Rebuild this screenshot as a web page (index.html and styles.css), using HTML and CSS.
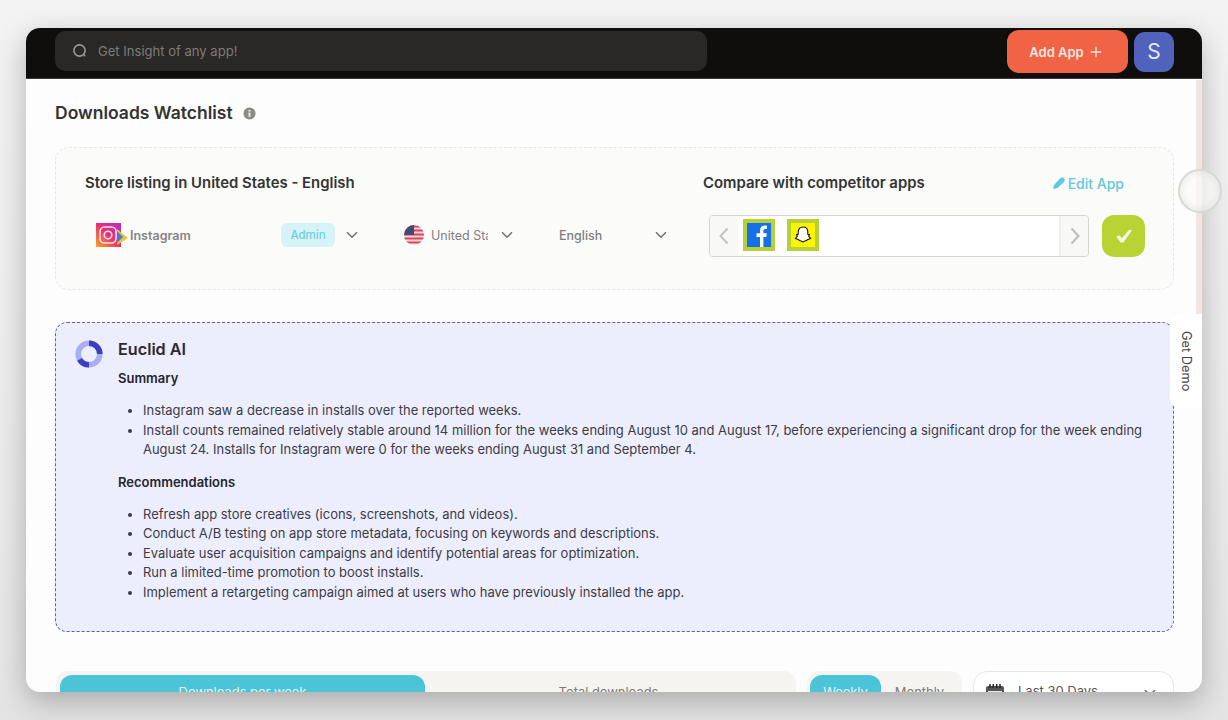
FILE: index.html
```html
<!DOCTYPE html>
<html lang="en">
<head>
<meta charset="utf-8">
<title>Downloads Watchlist</title>
<link rel="stylesheet" href="styles.css">
</head>
<body>
<div class="window">
  <header class="topbar">
    <div class="search">
      <svg class="search-icon" viewBox="0 0 16 16" width="16" height="16"><circle cx="7.5" cy="7.5" r="5.6" fill="none" stroke="#9a9a98" stroke-width="1.6"/><path d="M11.6 11.6l1.6 1.6" stroke="#9a9a98" stroke-width="1.4"/></svg>
      <span>Get Insight of any app!</span>
    </div>
    <button class="add-app">Add App <svg viewBox="0 0 12 12" width="12" height="12"><path d="M6 .8v10.4M.8 6h10.4" stroke="#f8e6e0" stroke-width="1.4"/></svg></button>
    <div class="avatar">S</div>
  </header>
  <main class="content">
    <h1 class="page-title">Downloads Watchlist <svg viewBox="0 0 14 14" width="13" height="13"><circle cx="7" cy="7" r="6.5" fill="#8a8a86"/><rect x="6" y="6" width="2" height="4.5" fill="#f2f2f0"/><rect x="6" y="3.2" width="2" height="1.8" fill="#f2f2f0"/></svg></h1>

    <section class="store-card">
      <div class="store-left">
        <h2 class="card-heading">Store listing in United States - English</h2>
        <div class="filters">
          <div class="filter app-filter">
            <svg class="app-icon" viewBox="0 0 32 26" width="32" height="26">
              <defs><linearGradient id="ig" x1="0" y1="1" x2="1" y2="0"><stop offset="0" stop-color="#fca81e"/><stop offset=".5" stop-color="#ee2f70"/><stop offset="1" stop-color="#b030c8"/></linearGradient></defs>
              <rect x="0" y="1" width="25" height="24" fill="url(#ig)"/>
              <rect x="4" y="5" width="16" height="16" rx="4.5" fill="none" stroke="#fbe3ee" stroke-width="1.6"/>
              <circle cx="12" cy="13" r="3.8" fill="none" stroke="#fbe3ee" stroke-width="1.6"/>
              <path d="M21 7l11 9-11 7z" fill="#f1c232"/><path d="M21 9l6 6-6 6z" fill="#3d7ed8"/>
            </svg>
            <span class="app-name">Instagram</span>
            <span class="badge">Admin</span>
            <svg class="chev" viewBox="0 0 12 8" width="12" height="8"><path d="M1 1.2l5 5 5-5" fill="none" stroke="#6f6f6f" stroke-width="1.5"/></svg>
          </div>
          <div class="filter country-filter">
            <svg class="flag" viewBox="0 0 20 20" width="20" height="20">
              <clipPath id="fc"><circle cx="10" cy="10" r="10"/></clipPath>
              <g clip-path="url(#fc)"><rect width="20" height="20" fill="#f3d5d8"/>
              <path d="M0 1.500h20M0 5.500h20M0 9.500h20M0 13.500h20M0 17.500h20" stroke="#d9475a" stroke-width="2"/>
              <rect width="10" height="10" fill="#3f4a78"/></g>
            </svg>
            <span class="clip-text">United States</span>
            <svg class="chev" viewBox="0 0 12 8" width="12" height="8"><path d="M1 1.2l5 5 5-5" fill="none" stroke="#6f6f6f" stroke-width="1.5"/></svg>
          </div>
          <div class="filter lang-filter">
            <span class="lang">English</span>
            <svg class="chev" viewBox="0 0 12 8" width="12" height="8"><path d="M1 1.2l5 5 5-5" fill="none" stroke="#6f6f6f" stroke-width="1.5"/></svg>
          </div>
        </div>
      </div>
      <div class="store-right">
        <div class="compare-head">
          <h2 class="card-heading">Compare with competitor apps</h2>
          <a class="edit-app"><svg viewBox="0 0 14 14" width="14" height="14"><path d="M1 13l1-4 6-6.500 2.500-1.500 2.500 2.500-1 2.500L5.500 12z" fill="#5ec8dc"/></svg>Edit App</a>
        </div>
        <div class="compare-row">
          <div class="carousel">
            <div class="arrow arrow-l"><svg viewBox="0 0 10 18" width="10" height="18"><path d="M8.500 1.500L1.500 9l7 7.500" fill="none" stroke="#c4c4c4" stroke-width="2"/></svg></div>
            <div class="tile fb"><svg viewBox="0 0 24 24" width="24" height="24"><rect width="24" height="24" fill="#1670e6"/><path d="M13 24v-10h-3.500v-3.800H13V7.500c0-3.300 2-5 4.800-5 .9 0 1.800.1 2.200.2v3.300h-1.700c-1.500 0-1.900.8-1.900 1.900v2.300h3.400l-.5 3.800h-2.900v10z" fill="#fff"/></svg></div>
            <div class="tile snap"><svg viewBox="0 0 24 24" width="24" height="24"><rect width="24" height="24" fill="#fbf500"/><path d="M12 4c3 0 4.800 2.200 4.800 5v2.300l1.700.3-.9 1.600 2 2.200c-1 .7-2.200.8-3 1.200-.5 1-1 1.200-2 1.100-1.200 0-1.700 1.200-2.600 1.200s-1.400-1.200-2.600-1.200c-1 .1-1.500-.1-2-1.100-.8-.4-2-.5-3-1.200l2-2.200-.9-1.600 1.700-.3V9c0-2.800 1.800-5 4.800-5z" fill="#fff" stroke="#111" stroke-width="1.100"/></svg></div>
            <div class="arrow arrow-r"><svg viewBox="0 0 10 18" width="10" height="18"><path d="M1.500 1.500L8.500 9l-7 7.500" fill="none" stroke="#bdbdbd" stroke-width="2"/></svg></div>
          </div>
          <button class="confirm"><svg viewBox="0 0 16 14" width="18" height="16"><path d="M1 7.500l3-1.200 2 2.800 6.500-7.600 2.500.5-7.500 10.800h-2.500z" fill="#f4f8dc"/></svg></button>
        </div>
      </div>
    </section>

    <section class="ai-card">
      <svg class="ai-logo" viewBox="0 0 28 28" width="28" height="28">
        <circle cx="14" cy="14" r="10.800" fill="none" stroke="#a9aef0" stroke-width="5.600"/>
        <path d="M14 3.200A10.800 10.800 0 0 1 24.800 14" fill="none" stroke="#3c3fc4" stroke-width="5.600"/>
        <path d="M4.600 19.300A10.800 10.800 0 0 0 14 24.800" fill="none" stroke="#3c3fc4" stroke-width="5.600"/>
      </svg>
      <div class="ai-body">
        <h2 class="ai-title">Euclid AI</h2>
        <h3 class="ai-sub">Summary</h3>
        <ul class="ai-list">
          <li>Instagram saw a decrease in installs over the reported weeks.</li>
          <li>Install counts remained relatively stable around 14 million for the weeks ending August 10 and August 17, before experiencing a significant drop for the week ending August 24. Installs for Instagram were 0 for the weeks ending August 31 and September 4.</li>
        </ul>
        <h3 class="ai-sub">Recommendations</h3>
        <ul class="ai-list">
          <li>Refresh app store creatives (icons, screenshots, and videos).</li>
          <li>Conduct A/B testing on app store metadata, focusing on keywords and descriptions.</li>
          <li>Evaluate user acquisition campaigns and identify potential areas for optimization.</li>
          <li>Run a limited-time promotion to boost installs.</li>
          <li>Implement a retargeting campaign aimed at users who have previously installed the app.</li>
        </ul>
      </div>
    </section>

    <div class="tabs-row">
      <div class="seg seg-main">
        <div class="seg-item active">Downloads per week</div>
        <div class="seg-item">Total downloads</div>
      </div>
      <div class="seg seg-period">
        <div class="seg-item active">Weekly</div>
        <div class="seg-item">Monthly</div>
      </div>
      <div class="date-pick">
        <svg viewBox="0 0 20 20" width="20" height="20"><rect x="1" y="3" width="18" height="16" rx="2" fill="#555"/><rect x="3" y="8" width="14" height="9" fill="#e8e8e8"/><path d="M5 1v4M8.300 1v4M11.700 1v4M15 1v4" stroke="#222" stroke-width="1.500"/></svg>
        <span>Last 30 Days</span>
        <svg class="chev date-chev" viewBox="0 0 12 8" width="12" height="8"><path d="M1 1.2l5 5 5-5" fill="none" stroke="#6f6f6f" stroke-width="1.500"/></svg>
      </div>
    </div>
  </main>
  <div class="scroll-track"></div>
  <div class="get-demo"><span>Get Demo</span></div>
</div>
<div class="bubble"></div>
</body>
</html>
```

FILE: styles.css
```css
* { box-sizing: border-box; }
html, body { height: 100%; }
body {
  margin: 0;
  padding: 28px 26px;
  height: 720px;
  overflow: hidden;
  background: linear-gradient(180deg, #f3f3f3 0%, #ececec 60%, #e4e4e4 100%);
  font-family: Inter, "Liberation Sans", sans-serif;
  color: #2b2b2b;
  position: relative;
}
.window {
  position: relative;
  width: 1176px;
  height: 664px;
  background: #fdfdfd;
  border-radius: 14px;
  overflow: hidden;
  box-shadow: 0 10px 30px rgba(0, 0, 0, .26);
}
.topbar {
  height: 51px;
  background: #0f0e0d;
  border-bottom: 1px solid #3a3a38;
  display: flex;
  align-items: center;
  padding: 0 28px 0 29px;
}
.search {
  width: 652px;
  height: 40px;
  margin-top: -4px;
  background: #2a2826;
  border-radius: 10px;
  display: flex;
  align-items: center;
  gap: 10px;
  padding: 0 17px;
  font-size: 13.050px;
  color: #7d7b79;
}
.search-icon { flex: none; }
.add-app {
  margin-left: auto;
  width: 121px;
  height: 43px;
  margin-top: -3px;
  padding: 0 4px 0 0;
  border: 0;
  border-radius: 12px;
  background: #f06445;
  color: #f8e6e0;
  font: 600 13px Inter, "Liberation Sans", sans-serif;
  display: flex;
  align-items: center;
  justify-content: center;
  gap: 6px;
}
.avatar {
  width: 40px;
  height: 40px;
  margin-left: 6px;
  margin-top: -3px;
  border-radius: 11px;
  background: #5062bc;
  color: #e6e9f8;
  font-size: 21px;
  display: flex;
  align-items: center;
  justify-content: center;
}
.content { padding: 0 28px 0 29px; }
.page-title {
  margin: 0;
  padding-top: 22px;
  height: 68px;
  font-size: 17.500px;
  line-height: 24px;
  font-weight: 600;
  color: #333;
  display: flex;
  align-items: flex-start;
  gap: 10px;
}
.page-title svg { margin-top: 6px; }
.store-card {
  height: 143px;
  border: 1px dashed #e6e6e4;
  border-radius: 14px;
  background: #fbfbfa;
  display: flex;
  padding: 25px 29px 0 29px;
}
.store-left { flex: none; width: 618px; }
.card-heading {
  margin: 0;
  font-size: 14.900px;
  line-height: 20px;
  font-weight: 600;
  color: #333;
}
.filters {
  display: flex;
  align-items: center;
  margin-top: 29px;
  height: 26px;
  font-size: 12.500px;
  font-weight: 500;
  color: #7f7f7f;
}
.filter { display: flex; align-items: center; }
.app-filter { width: 319px; padding-left: 11px; }
.app-icon { flex: none; margin-right: 2px; }
.app-name { width: 151px; font-weight: 600; color: #858585; }
.badge {
  width: 54px;
  height: 24px;
  border-radius: 6px;
  background: #d6f3f8;
  color: #6fcfe0;
  font-size: 11.500px;
  display: flex;
  align-items: center;
  justify-content: center;
  margin-right: 11px;
}
.country-filter { width: 154px; }
.flag { flex: none; margin-right: 7px; }
.clip-text { width: 57px; overflow: hidden; white-space: nowrap; font-weight: 400; margin-right: 13px; }
.lang-filter { width: 109px; padding-left: 1px; }
.lang { flex: 1; font-weight: 500; color: #7f7f7f; }
.store-right { flex: 1; min-width: 0; }
.compare-head { display: flex; align-items: center; justify-content: space-between; padding-right: 20px; }
.edit-app {
  display: flex;
  align-items: center;
  gap: 2px;
  font-size: 14px;
  font-weight: 500;
  color: #62c7dc;
}
.compare-row { display: flex; align-items: center; gap: 13px; margin-top: 22px; padding-left: 6px; }
.carousel {
  flex: none;
  width: 380px;
  height: 42px;
  border: 1px solid #d4d4d4;
  border-radius: 4px;
  background: #fff;
  display: flex;
  align-items: center;
  overflow: hidden;
}
.arrow {
  width: 28px;
  height: 100%;
  background: #f8f8f7;
  display: flex;
  align-items: center;
  justify-content: center;
  flex: none;
}
.arrow-r { margin-left: auto; border-left: 2px solid #eeeeee; width: 29px; }
.tile {
  width: 32px;
  height: 32px;
  border: 4px solid #b9cf3a;
  flex: none;
  margin: -2px 12px 0 0;
}
.tile svg { display: block; }
.tile.fb { margin-left: 5px; }
.confirm {
  flex: none;
  width: 43px;
  height: 42px;
  padding: 0;
  border: 0;
  border-radius: 12px;
  background: #b9d334;
  display: flex;
  align-items: center;
  justify-content: center;
}
.ai-card {
  margin-top: 32px;
  height: 310px;
  border: 1px dashed #6458b8;
  border-radius: 12px;
  background: #ecedfd;
  display: flex;
  padding: 14px 20px 0 19px;
  gap: 15px;
}
.ai-logo { flex: none; margin-top: 3px; }
.ai-title {
  margin: 0;
  font-size: 16.200px;
  line-height: 24px;
  font-weight: 600;
  color: #2a2a33;
}
.ai-sub {
  margin: 7px 0 0;
  font-size: 13px;
  line-height: 20px;
  font-weight: 600;
  color: #26262c;
}
.ai-body { flex: 1; min-width: 0; }
.ai-list {
  margin: 13px 0 12px;
  padding-left: 25px;
  font-size: 12.970px;
  line-height: 19.500px;
  color: #3c3c44;
}
.ai-list + .ai-sub { margin-top: 0; }
.tabs-row {
  display: flex;
  margin-top: 39px;
  gap: 11px;
  padding-left: 1px;
}
.seg {
  display: flex;
  height: 60px;
  padding: 4px;
  background: #f5f4f0;
  border-radius: 12px;
  font-size: 12.900px;
  color: #7d7d7a;
}
.seg-main { width: 740px; }
.seg-main .seg-item { flex: 1; }
.seg-main .seg-item.active { flex: none; width: 365px; }
.seg-period { width: 155px; padding-left: 3px; }
.seg-period .seg-item { flex: 1; }
.seg-period .seg-item.active { flex: none; width: 71px; }
.seg-item {
  display: flex;
  align-items: flex-start;
  justify-content: center;
  padding-top: 10px;
  border-radius: 12px;
}
.seg-item.active { background: #4cc4d8; color: #e4f6fa; }
.date-pick {
  width: 201px;
  height: 60px;
  border: 1px solid #e6e6e4;
  border-radius: 14px;
  background: #fff;
  display: flex;
  align-items: flex-start;
  padding: 11px 17px 0 11px;
  gap: 13px;
  font-size: 13px;
  color: #555;
}
.date-chev { margin-left: auto; margin-top: 6px; }
.scroll-track {
  position: absolute;
  top: 52px;
  right: 0;
  width: 6px;
  height: 234px;
  background: #f3e4e1;
}
.get-demo {
  position: absolute;
  top: 286px;
  right: 0;
  width: 32px;
  height: 94px;
  background: #fff;
  border-radius: 10px 0 0 10px;
  display: flex;
  align-items: center;
  justify-content: center;
  font-size: 12.800px;
  color: #444;
}
.get-demo span { writing-mode: vertical-rl; }
.bubble {
  position: absolute;
  left: 1178px;
  top: 169px;
  width: 44px;
  height: 44px;
  border-radius: 50%;
  border: 2px solid #d8d8d6;
  background: radial-gradient(circle, rgba(250, 250, 249, .7) 45%, rgba(222, 222, 220, .8) 100%);
}
```
